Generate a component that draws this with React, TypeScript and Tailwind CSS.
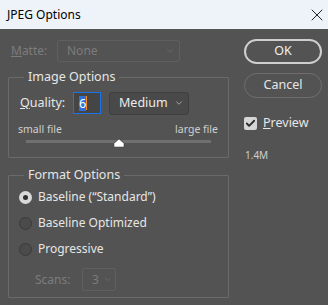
import { Check, ChevronDown, X } from "lucide-react";

const FONT = { fontFamily: '"Noto Sans", "Open Sans", sans-serif' };

function Radio({ checked, label }: { checked?: boolean; label: string }) {
  return (
    <div className="flex h-[26px] items-center gap-[6px] pl-[10px]">
      {checked ? (
        <span className="flex h-[13px] w-[13px] items-center justify-center rounded-full bg-[#d9d9d9]">
          <span className="h-[5px] w-[5px] rounded-full bg-[#2f2f2f]" />
        </span>
      ) : (
        <span className="h-[13px] w-[13px] rounded-full border border-[#3a3a3a] bg-[#4b4b4b]" />
      )}
      <span className="text-[12px] text-[#e6e6e6]">{label}</span>
    </div>
  );
}

function Group({ title, className, children }: { title: string; className: string; children: React.ReactNode }) {
  return (
    <div className={"relative rounded-[1px] border border-[#6a6a6a] " + className}>
      <span className="absolute left-[15px] top-[-10px] bg-[#535353] px-[4px] text-[12.5px] leading-[18px] text-[#e6e6e6]">
        {title}
      </span>
      {children}
    </div>
  );
}

export default function App() {
  return (
    <div className="h-[305px] w-[328px] overflow-hidden bg-[#535353] select-none" style={FONT}>
      <div className="flex h-[29px] items-center justify-between bg-[#eef3f9] pl-[7px] pr-[1px]">
        <span className="text-[12px] text-black">JPEG Options</span>
        <X className="h-[20px] w-[20px] text-[#222]" strokeWidth={1.2} />
      </div>

      <div className="flex pl-[8px]">
        {/* left column */}
        <div className="w-[221px]">
          <div className="mt-[11px] flex h-[22px] items-center">
            <span className="w-[49px] pl-[3px] text-[12px] text-[#7c7c7c]">
              <u>M</u>atte:
            </span>
            <div className="flex h-[22px] w-[123px] items-center justify-between rounded-[3px] border border-[#5f5f5f] pl-[9px] pr-[4px]">
              <span className="text-[12px] text-[#7c7c7c]">None</span>
              <ChevronDown className="h-[10px] w-[10px] text-[#6e6e6e]" />
            </div>
          </div>

          <Group title="Image Options" className="mt-[15px] h-[81px]">
            <div className="mt-[14px] flex h-[22px] items-center pl-[11px]">
              <span className="w-[53px] text-[12.5px] text-[#e6e6e6]">
                <u>Q</u>uality:
              </span>
              <div className="flex h-[22px] w-[28px] items-center border border-[#1a73e8] bg-[#454545] pl-[5px]">
                <span className="bg-[#2f6fd8] text-[12.5px] leading-[15px] text-white">6</span>
                <span className="h-[14px] w-[1px] bg-[#ff8c1a]" />
              </div>
              <div className="ml-[8px] flex h-[23px] w-[80px] items-center justify-between rounded-[3px] border border-[#3f3f3f] bg-[#494949] pl-[9px] pr-[4px]">
                <span className="text-[12.5px] text-[#ececec]">Medium</span>
                <ChevronDown className="h-[10px] w-[10px] text-[#b5b5b5]" />
              </div>
            </div>
            <div className="mt-[10px] flex h-[12px] items-center justify-between pl-[9px] pr-[10px] text-[10.5px] text-[#cfcfcf]">
              <span>small file</span>
              <span>large file</span>
            </div>
            <div className="relative ml-[17px] mt-[2px] h-[10px] w-[185px]">
              <div className="absolute left-0 right-0 top-[2px] h-[3px] bg-[#707070]" />
              <svg className="absolute left-[87px] top-0" width="12" height="10" viewBox="0 0 12 10">
                <path d="M6 0.8 L11.2 5.3 V9.2 H0.8 V5.3 Z" fill="#ffffff" stroke="#2a2a2a" strokeWidth="0.8" strokeLinejoin="round" />
              </svg>
            </div>
          </Group>

          <Group title="Format Options" className="mt-[17px] h-[123px]">
            <div className="pt-[8px]">
              <Radio checked label="Baseline (“Standard”)" />
              <Radio label="Baseline Optimized" />
              <Radio label="Progressive" />
              <div className="mt-[6px] flex h-[23px] items-center pl-[26px]">
                <span className="w-[47px] text-[12px] text-[#7c7c7c]">Scans:</span>
                <div className="flex h-[23px] w-[34px] items-center justify-between rounded-[2px] border border-[#5f5f5f] pl-[9px] pr-[3px]">
                  <span className="text-[12px] text-[#7c7c7c]">3</span>
                  <ChevronDown className="h-[9px] w-[9px] text-[#6e6e6e]" />
                </div>
              </div>
            </div>
          </Group>
        </div>

        {/* right column */}
        <div className="ml-[15px] w-[78px]">
          <div className="mt-[10px] flex h-[25px] items-center justify-center rounded-full border-2 border-[#cfcfcf] text-[12.5px] text-[#f0f0f0]">
            OK
          </div>
          <div className="mt-[9px] flex h-[25px] items-center justify-center rounded-full border border-[#6e6e6e] text-[12.5px] text-[#e6e6e6]">
            Cancel
          </div>
          <div className="mt-[19px] flex h-[13px] items-center gap-[6px]">
            <span className="flex h-[13px] w-[13px] items-center justify-center rounded-[2px] bg-[#d6d6d6]">
              <Check className="h-[11px] w-[11px] text-[#2b2b2b]" strokeWidth={4} />
            </span>
            <span className="text-[12.5px] text-[#e6e6e6]">
              <u>P</u>review
            </span>
          </div>
          <div className="mt-[19px] pl-[1px] text-[10px] leading-[12px] text-[#cfcfcf]">1.4M</div>
        </div>
      </div>
    </div>
  );
}
